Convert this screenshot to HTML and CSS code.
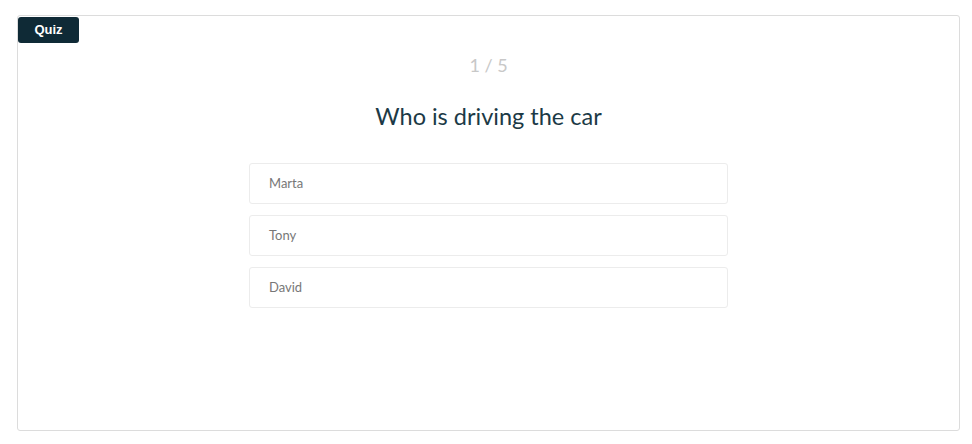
FILE: index.html
```html
<!DOCTYPE html>
<html lang="en">
<head>
  <meta charset="UTF-8" />
  <title>Quiz</title>
  <link rel="stylesheet" href="styles.css">
</head>
<body>
  <div class="quiz-card">
    <span class="quiz-badge">Quiz</span>

    <div class="quiz-counter">1 / 5</div>
    <h2 class="quiz-question">Who is driving the car</h2>

    <ul class="quiz-options">
      <li class="quiz-option">Marta</li>
      <li class="quiz-option">Tony</li>
      <li class="quiz-option">David</li>
    </ul>
  </div>
</body>
</html>
```

FILE: styles.css
```css
body {
  margin: 0;
  padding: 15px 12px 0 17px;
  font-family: Lato, "Liberation Sans", sans-serif;
  background: #fff;
}
.quiz-card {
  position: relative;
  box-sizing: border-box;
  width: 943px;
  height: 416px;
  border: 1px solid #dcdcdc;
  border-radius: 3px;
  padding-top: 40px;
}
.quiz-badge {
  position: absolute;
  top: 1px;
  left: 0;
  width: 61px;
  height: 26px;
  line-height: 26px;
  text-align: center;
  background: #0f2a36;
  color: #fff;
  font-family: "Liberation Sans", Arial, sans-serif;
  font-weight: 700;
  font-size: 13px;
  border-radius: 3px;
}
.quiz-counter {
  text-align: center;
  color: #c8c8c8;
  font-size: 18px;
  line-height: 18px;
}
.quiz-question {
  margin: 29px 0 0;
  text-align: center;
  font-weight: 400;
  font-size: 23.5px;
  line-height: 26px;
  color: #1c3a46;
}
.quiz-options {
  list-style: none;
  margin: 34px auto 0;
  padding: 0;
  width: 479px;
  display: flex;
  flex-direction: column;
  gap: 11px;
}
.quiz-option {
  box-sizing: border-box;
  height: 41px;
  line-height: 39px;
  padding-left: 19px;
  border: 1px solid #ececec;
  border-radius: 3px;
  font-size: 13px;
  color: #777;
}
```
